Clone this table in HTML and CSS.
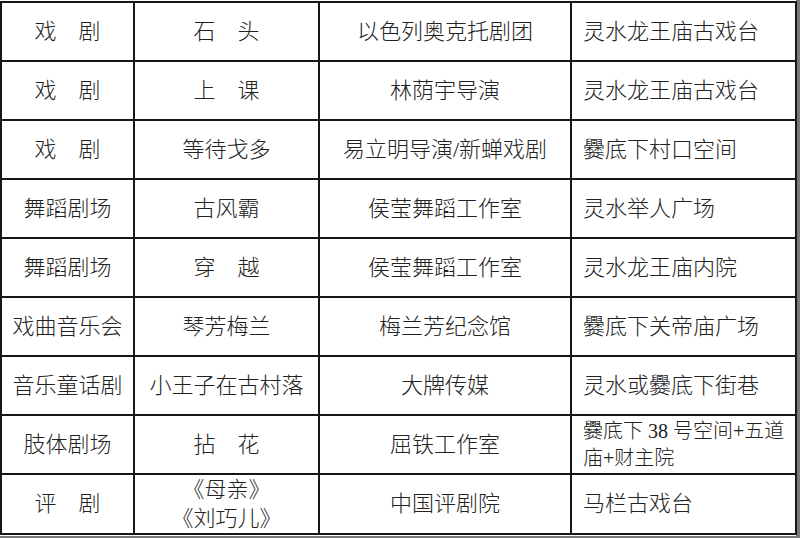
FILE: index.html
```html
<!DOCTYPE html>
<html lang="zh-CN">
<head>
<meta charset="utf-8">
<title>演出安排</title>
<link rel="stylesheet" href="styles.css">
</head>
<body>
<div class="sheet">
<table class="schedule">
<colgroup>
<col class="c1"><col class="c2"><col class="c3"><col class="c4">
</colgroup>
<tbody>
<tr><td>戏　剧</td><td>石　头</td><td>以色列奥克托剧团</td><td class="venue">灵水龙王庙古戏台</td></tr>
<tr><td>戏　剧</td><td>上　课</td><td>林荫宇导演</td><td class="venue">灵水龙王庙古戏台</td></tr>
<tr><td>戏　剧</td><td>等待戈多</td><td>易立明导演/新蝉戏剧</td><td class="venue">爨底下村口空间</td></tr>
<tr><td>舞蹈剧场</td><td>古风霸</td><td>侯莹舞蹈工作室</td><td class="venue">灵水举人广场</td></tr>
<tr><td>舞蹈剧场</td><td>穿　越</td><td>侯莹舞蹈工作室</td><td class="venue">灵水龙王庙内院</td></tr>
<tr><td>戏曲音乐会</td><td>琴芳梅兰</td><td>梅兰芳纪念馆</td><td class="venue">爨底下关帝庙广场</td></tr>
<tr><td>音乐童话剧</td><td>小王子在古村落</td><td>大牌传媒</td><td class="venue">灵水或爨底下街巷</td></tr>
<tr><td>肢体剧场</td><td>拈　花</td><td>屈铁工作室</td><td class="venue two tight">爨底下 38 号空间+五道<br>庙+财主院</td></tr>
<tr><td>评　剧</td><td class="two">《母亲》<br>《刘巧儿》</td><td>中国评剧院</td><td class="venue">马栏古戏台</td></tr>
</tbody>
</table>
</div>
</body>
</html>
```

FILE: styles.css
```css
html, body {
  margin: 0;
  padding: 0;
}
body {
  background: #7a7a7a;
  width: 800px;
  height: 538px;
  overflow: hidden;
}
.sheet {
  width: 796px;
  height: 536px;
  background: #ffffff;
  padding-top: 1px;
  box-sizing: border-box;
}
.schedule {
  border-collapse: collapse;
  table-layout: fixed;
  width: 795px;
  font-family: "Liberation Serif", "Noto Sans CJK SC", serif;
  font-weight: 300;
  font-size: 22px;
  color: #222222;
  background: #ffffff;
}
.c1 { width: 133px; }
.c2 { width: 185px; }
.c3 { width: 252px; }
.c4 { width: 225px; }
.schedule td {
  border: 2px solid #161616;
  height: 57px;
  padding: 0;
  text-align: center;
  vertical-align: middle;
  line-height: 28px;
  white-space: nowrap;
}
.schedule td.venue {
  text-align: left;
  padding-left: 11px;
}
.schedule td.two {
  line-height: 29px;
}
.schedule td.tight {
  font-size: 20px;
  line-height: 27px;
}
```
